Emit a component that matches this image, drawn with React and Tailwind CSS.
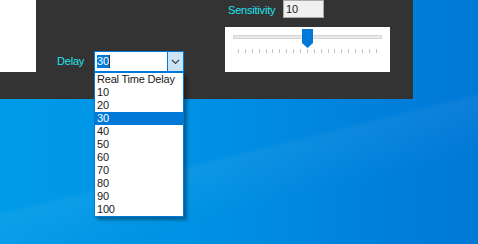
// App.jsx — WinForms-style settings panel with an open "Delay" combo box over a Windows desktop.
const font = { fontFamily: '"Liberation Sans", Arial, sans-serif' };

const delayItems = ['Real Time Delay', '10', '20', '30', '40', '50', '60', '70', '80', '90', '100'];

// ── Combo box with its drop-down list open ────────────────────────────────────
const DelayCombo = () => (
  <div className="relative w-[90px] h-[21px] border border-[#0078d7] bg-white flex">
    <div className="flex-1 flex items-center pl-[2px]">
      <span className="bg-[#0078d7] text-white h-[13px] leading-[13px] px-[0px] text-[11px] tracking-[-0.2px]">30</span>
      <span className="w-px h-[13px] bg-[#333]" />
    </div>
    <div className="w-[16px] bg-[#cce4f7] border-l border-[#0078d7] flex items-center justify-center">
      <svg width="9" height="6" viewBox="0 0 9 6">
        <path d="M1 1 L4.5 4.5 L8 1" fill="none" stroke="#404040" strokeWidth="1.2" />
      </svg>
    </div>

    {/* Drop-down list lies over the desktop */}
    <div className="absolute left-[-1px] top-[20px] w-[90px] border border-[#0078d7] bg-white shadow-[3px_3px_3px_rgba(0,0,0,0.35)]">
      {delayItems.map((item) => (
        <div
          key={item}
          className={`h-[13px] leading-[13px] pl-[2px] text-[11px] tracking-[-0.2px] ${item === '30' ? 'bg-[#0078d7] text-white' : 'text-[#1a1a1a]'}`}
        >
          {item}
        </div>
      ))}
    </div>
  </div>
);

// ── Track bar (slider) ────────────────────────────────────────────────────────
const TrackBar = () => (
  <div className="relative w-[165px] h-[45px] bg-white pt-[8px] pl-[8px]">
    <div className="w-[149px] h-[4px] bg-[#e7eaea] border border-[#d6d6d6]" />
    <div className="flex justify-between w-[139px] ml-[5px] mt-[10px]">
      {Array.from({ length: 21 }).map((_, i) => (
        <div key={i} className="w-px h-[4px] bg-[#c4c4c4]" />
      ))}
    </div>
    {/* Thumb sits over the track */}
    <svg className="absolute left-[77px] top-[2px]" width="11" height="19" viewBox="0 0 11 19">
      <polygon points="0,0 11,0 11,14 5.5,19 0,14" fill="#0078d7" />
    </svg>
  </div>
);

export default function App() {
  return (
    <div
      className="w-[478px] h-[244px] overflow-hidden bg-[linear-gradient(166deg,rgba(255,255,255,0)_58%,rgba(255,255,255,0.05)_60%,rgba(255,255,255,0)_75%),linear-gradient(to_right,#009be8,#0090e3_45%,#0082dc_75%,#0078d6)]"
      style={font}
    >
      {/* ── Dark form panel ── */}
      <div className="w-[413px] h-[99px] bg-[#333333] flex items-start">
        <div className="w-[36px] h-[72px] bg-white" />

        <div className="flex items-center mt-[51px] ml-[21px]">
          <span className="w-[37px] text-[11px] tracking-[-0.2px] text-[#22e4ee]">Delay</span>
          <DelayCombo />
        </div>

        <div className="flex flex-col ml-[41px]">
          <div className="flex items-start h-[18px]">
            <span className="w-[58px] pl-[3px] pt-[2px] text-[11px] tracking-[-0.2px] text-[#22e4ee]">Sensitivity</span>
            <div className="w-[41px] h-[18px] bg-[#f0f0f0] border border-[#a9a9a9] pl-[2px] text-[11px] leading-[16px] text-[#1a1a1a]">
              10
            </div>
          </div>
          <div className="mt-[9px]">
            <TrackBar />
          </div>
        </div>
      </div>
    </div>
  );
}
